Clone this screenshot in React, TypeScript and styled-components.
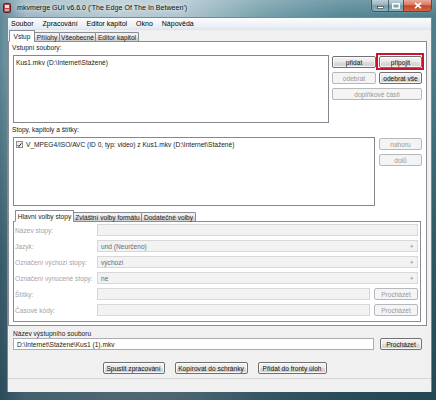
import React from "react";
import styled, { createGlobalStyle, css } from "styled-components";

const Global = createGlobalStyle`
  html, body { margin: 0; padding: 0; width: 436px; height: 400px; overflow: hidden; background: #4d7f8c; }
  * { box-sizing: border-box; }
  body { font-family: "Liberation Sans", Arial, sans-serif; font-size: 6.6px; color: #1a1a1a; }
`;

const Frame = styled.div`
  width: 436px;
  height: 400px;
  display: flex;
  flex-direction: column;
  padding: 0 4px 8px 7px;
  background:
    linear-gradient(180deg, rgba(255,255,255,0.18) 0px, rgba(255,255,255,0) 17px, rgba(10,40,55,0) 60px, rgba(10,40,55,0.45) 250px, rgba(10,35,50,0.6) 400px),
    linear-gradient(90deg, #5e8796 0px, #9bb8c4 6%, #b8ccd4 28%, #aec5ce 42%, #76a0ab 60%, #558796 78%, #4b7d8b 100%);
`;

const TitleBar = styled.div`
  height: 17px;
  margin: 0 -4px 0 -7px;
  display: flex;
  align-items: flex-start;
  justify-content: space-between;
`;

const TitleLeft = styled.div`
  display: flex;
  align-items: center;
  height: 16px;
  padding-left: 3px;
  gap: 6px;
`;

const TitleText = styled.span`
  font-size: 7.1px;
  color: #111;
  text-shadow: 0 0 4px rgba(255,255,255,0.95), 0 0 8px rgba(255,255,255,0.8);
  white-space: nowrap;
`;

const Controls = styled.div`
  display: flex;
  margin-right: 4px;
  border: 1px solid #3c5560;
  border-top: none;
  border-radius: 0 0 4px 4px;
  overflow: hidden;
  box-shadow: 0 0 1px rgba(255,255,255,0.6);
`;

const CtrlBtn = styled.div<{ $w: number; $close?: boolean }>`
  width: ${(p) => p.$w}px;
  height: 11px;
  display: flex;
  align-items: center;
  justify-content: center;
  border-left: 1px solid rgba(40,60,70,0.7);
  &:first-child { border-left: none; }
  ${(p) =>
    p.$close
      ? css`background: linear-gradient(180deg, #e9a899 0%, #d77a63 45%, #c4462c 52%, #d6643f 100%);`
      : css`background: linear-gradient(180deg, rgba(255,255,255,0.55) 0%, rgba(255,255,255,0.3) 45%, rgba(160,190,200,0.25) 52%, rgba(200,225,230,0.45) 100%);`}
`;

const Client = styled.div`
  flex: 1;
  display: flex;
  flex-direction: column;
  background: #f0f0f0;
  border: 1px solid #6f8c97;
  border-bottom: none;
`;

const MenuBar = styled.div`
  height: 12px;
  display: flex;
  align-items: center;
  gap: 5px;
  padding-left: 1px;
  font-size: 7px;
  background: linear-gradient(180deg, #fbfcfd 0%, #eef2f8 60%, #e3e9f2 100%);
  border-bottom: 1px solid #dfe4ec;
`;

const MenuItem = styled.span`
  padding: 0 2px;
  color: #000;
`;

const TabStrip = styled.div<{ $ml: number }>`
  display: flex;
  align-items: flex-end;
  height: 12px;
  padding-left: ${(p) => p.$ml}px;
  position: relative;
  z-index: 1;
  margin-bottom: -1px;
`;

const Tab = styled.div<{ $w: number; $active?: boolean }>`
  width: ${(p) => p.$w}px;
  height: ${(p) => (p.$active ? 12 : 10)}px;
  display: flex;
  align-items: center;
  justify-content: center;
  border: 1px solid #898c95;
  border-bottom: ${(p) => (p.$active ? "1px solid #fff" : "1px solid #898c95")};
  margin-left: -1px;
  white-space: nowrap;
  border-radius: 1px 1px 0 0;
  background: ${(p) =>
    p.$active ? "#fff" : "linear-gradient(180deg, #f2f2f2 0%, #ebebeb 50%, #dddddd 51%, #cfcfcf 100%)"};
  &:first-child { margin-left: 0; }
`;

const Page = styled.div`
  height: 285px;
  margin: 0 4px 0 0;
  border: 1px solid #898c95;
  background: #fff;
  display: flex;
  flex-direction: column;
  padding: 1px 4px 3px 4px;
`;

const Label = styled.div<{ $disabled?: boolean }>`
  height: 9px;
  line-height: 9px;
  color: ${(p) => (p.$disabled ? "#a3a3a3" : "#1a1a1a")};
  white-space: nowrap;
`;

const SectionLabel = styled(Label)`
  margin-left: -1px;
  margin-bottom: 3px;
`;

const Row = styled.div<{ $h: number; $gap: number; $mb?: number }>`
  display: flex;
  height: ${(p) => p.$h}px;
  gap: ${(p) => p.$gap}px;
  margin-bottom: ${(p) => p.$mb ?? 0}px;
`;

const ListBox = styled.div`
  flex: 1;
  border: 1px solid #828790;
  background: #fff;
  padding: 2px 2px;
`;

const ListItem = styled.div`
  display: flex;
  align-items: center;
  gap: 3px;
  height: 9px;
  white-space: nowrap;
`;

const CheckBox = styled.span`
  width: 7px;
  height: 7px;
  border: 1px solid #8f8f8f;
  background: linear-gradient(135deg, #e5e5e5, #ffffff);
  display: flex;
  align-items: center;
  justify-content: center;
`;

const ButtonGrid = styled.div<{ $w: number }>`
  width: ${(p) => p.$w}px;
  padding-top: 1px;
  display: grid;
  grid-template-columns: ${(p) => (p.$w > 60 ? "44px 43px" : "1fr")};
  grid-auto-rows: 12px;
  column-gap: 3px;
  row-gap: 4px;
  align-content: start;
`;

const Button = styled.button<{ $w?: number; $span?: boolean; $highlight?: boolean }>`
  font: inherit;
  height: 12px;
  padding: 0 2px;
  margin: 0;
  ${(p) => p.$w && css`width: ${p.$w}px;`}
  ${(p) => p.$span && css`grid-column: 1 / span 2;`}
  border: 1px solid #707070;
  border-radius: 2px;
  color: #111;
  white-space: nowrap;
  position: relative;
  background: linear-gradient(180deg, #f2f2f2 0%, #ebebeb 50%, #dddddd 51%, #cfcfcf 100%);
  box-shadow: inset 0 0 0 1px rgba(255,255,255,0.8);
  &:disabled {
    border-color: #b5b9bc;
    background: #f4f4f4;
    color: #9a9a9a;
    box-shadow: none;
  }
  ${(p) =>
    p.$highlight &&
    css`
      &::after {
        content: "";
        position: absolute;
        left: -4px;
        right: -3px;
        top: -4px;
        bottom: -3px;
        border: 2px solid #c8142c;
      }
    `}
`;

const SubSection = styled.div`
  margin-top: 4px;
  display: flex;
  flex-direction: column;
  padding-right: 1px;
`;

const SubPage = styled.div`
  height: 101px;
  border: 1px solid #898c95;
  background: #fff;
  display: flex;
  flex-direction: column;
  gap: 4px;
  padding: 2px 2px 0 1px;
`;

const FieldRow = styled.div`
  display: grid;
  grid-template-columns: 82px 1fr;
  height: 12px;
  align-items: center;
`;

const FieldWithButton = styled.div`
  display: flex;
  gap: 4px;
  height: 12px;
`;

const Field = styled.div<{ $disabled?: boolean }>`
  flex: 1;
  height: 12px;
  display: flex;
  align-items: center;
  justify-content: space-between;
  padding: 0 3px;
  white-space: nowrap;
  border: 1px solid ${(p) => (p.$disabled ? "#d5d7d9" : "#abadb3")};
  background: ${(p) => (p.$disabled ? "#f2f2f2" : "#fff")};
  color: ${(p) => (p.$disabled ? "#6a6a6a" : "#1a1a1a")};
`;

const Arrow = styled.span`
  font-size: 4.5px;
  color: #9a9a9a;
`;

const Below = styled.div`
  display: flex;
  flex-direction: column;
  padding: 3px 9px 0 5px;
`;

const BottomButtons = styled.div`
  display: flex;
  justify-content: center;
  gap: 10px;
  margin-top: 11px;
  padding-right: 6px;
`;

const StatusBar = styled.div`
  flex: 1;
  margin-top: 4px;
  border-top: 1px solid #d5d5d5;
  background: #f0f0f0;
`;

const AppIcon = () => (
  <svg width="8" height="10" viewBox="0 0 8 10">
    <rect x="0.5" y="0.5" width="7" height="9" rx="1" fill="#b14a4f" stroke="#5a2226" />
    <rect x="2" y="2" width="4" height="3" fill="#f4dede" />
    <rect x="2" y="6" width="4" height="2" fill="#e9a0a0" />
  </svg>
);

const Check = () => (
  <svg width="6" height="6" viewBox="0 0 6 6">
    <path d="M0.8 3.2 L2.3 4.8 L5.3 1" fill="none" stroke="#1c1c1c" strokeWidth="1.2" />
  </svg>
);

const DisabledLabel = ({ children }: { children: React.ReactNode }) => <Label $disabled>{children}</Label>;

export default function App() {
  return (
    <>
      <Global />
      <Frame>
        <TitleBar>
          <TitleLeft>
            <AppIcon />
            <TitleText>mkvmerge GUI v6.6.0 ('The Edge Of The In Between')</TitleText>
          </TitleLeft>
          <Controls>
            <CtrlBtn $w={16}>
              <svg width="7" height="6" viewBox="0 0 7 6">
                <rect x="0.5" y="3.5" width="6" height="2" fill="#fff" stroke="#333" strokeWidth="0.6" />
              </svg>
            </CtrlBtn>
            <CtrlBtn $w={15}>
              <svg width="8" height="6" viewBox="0 0 8 6">
                <rect x="0.8" y="0.8" width="6.4" height="4.4" fill="none" stroke="#fff" strokeWidth="1.4" />
              </svg>
            </CtrlBtn>
            <CtrlBtn $w={28} $close>
              <svg width="8" height="7" viewBox="0 0 8 7">
                <path d="M1 0.8 L7 6.2 M7 0.8 L1 6.2" stroke="#fff" strokeWidth="1.6" />
              </svg>
            </CtrlBtn>
          </Controls>
        </TitleBar>
        <Client>
          <MenuBar>
            <MenuItem>Soubor</MenuItem>
            <MenuItem>Zpracování</MenuItem>
            <MenuItem>Editor kapitol</MenuItem>
            <MenuItem>Okno</MenuItem>
            <MenuItem>Nápověda</MenuItem>
          </MenuBar>
          <TabStrip $ml={1}>
            <Tab $w={26} $active>Vstup</Tab>
            <Tab $w={26}>Přílohy</Tab>
            <Tab $w={37}>Všeobecné</Tab>
            <Tab $w={44}>Editor kapitol</Tab>
          </TabStrip>
          <Page>
            <SectionLabel>Vstupní soubory:</SectionLabel>
            <Row $h={68} $gap={3} $mb={2}>
              <ListBox>
                <ListItem>Kus1.mkv (D:\Internet\Stažené)</ListItem>
              </ListBox>
              <ButtonGrid $w={90}>
                <Button>přidat</Button>
                <Button $highlight>připojit</Button>
                <Button disabled>odebrat</Button>
                <Button>odebrat vše</Button>
                <Button disabled $span>doplňkové části</Button>
              </ButtonGrid>
            </Row>
            <SectionLabel>Stopy, kapitoly a štítky:</SectionLabel>
            <Row $h={69} $gap={4}>
              <ListBox>
                <ListItem>
                  <CheckBox>
                    <Check />
                  </CheckBox>
                  V_MPEG4/ISO/AVC (ID 0, typ: video) z Kus1.mkv (D:\Internet\Stažené)
                </ListItem>
              </ListBox>
              <ButtonGrid $w={43}>
                <Button disabled>nahoru</Button>
                <Button disabled>dolů</Button>
              </ButtonGrid>
            </Row>
            <SubSection>
              <TabStrip $ml={2}>
                <Tab $w={59} $active>Hlavní volby stopy</Tab>
                <Tab $w={69}>Zvláštní volby formátu</Tab>
                <Tab $w={55}>Dodatečné volby</Tab>
              </TabStrip>
              <SubPage>
                <FieldRow>
                  <DisabledLabel>Název stopy:</DisabledLabel>
                  <Field $disabled />
                </FieldRow>
                <FieldRow>
                  <DisabledLabel>Jazyk:</DisabledLabel>
                  <Field $disabled>
                    und (Neurčeno)<Arrow>▼</Arrow>
                  </Field>
                </FieldRow>
                <FieldRow>
                  <DisabledLabel>Označení výchozí stopy:</DisabledLabel>
                  <Field $disabled>
                    výchozí<Arrow>▼</Arrow>
                  </Field>
                </FieldRow>
                <FieldRow>
                  <DisabledLabel>Označení vynucené stopy:</DisabledLabel>
                  <Field $disabled>
                    ne<Arrow>▼</Arrow>
                  </Field>
                </FieldRow>
                <FieldRow>
                  <DisabledLabel>Štítky:</DisabledLabel>
                  <FieldWithButton>
                    <Field $disabled />
                    <Button disabled $w={44}>Procházet</Button>
                  </FieldWithButton>
                </FieldRow>
                <FieldRow>
                  <DisabledLabel>Časové kódy:</DisabledLabel>
                  <FieldWithButton>
                    <Field $disabled />
                    <Button disabled $w={44}>Procházet</Button>
                  </FieldWithButton>
                </FieldRow>
              </SubPage>
            </SubSection>
          </Page>
          <Below>
            <Label>Název výstupního souboru</Label>
            <Row $h={13} $gap={6}>
              <Field>D:\Internet\Stažené\Kus1 (1).mkv</Field>
              <Button $w={42}>Procházet</Button>
            </Row>
            <BottomButtons>
              <Button $w={62}>Spustit zpracování</Button>
              <Button $w={73}>Kopírovat do schránky</Button>
              <Button $w={69}>Přidat do fronty úloh</Button>
            </BottomButtons>
          </Below>
          <StatusBar />
        </Client>
      </Frame>
    </>
  );
}
